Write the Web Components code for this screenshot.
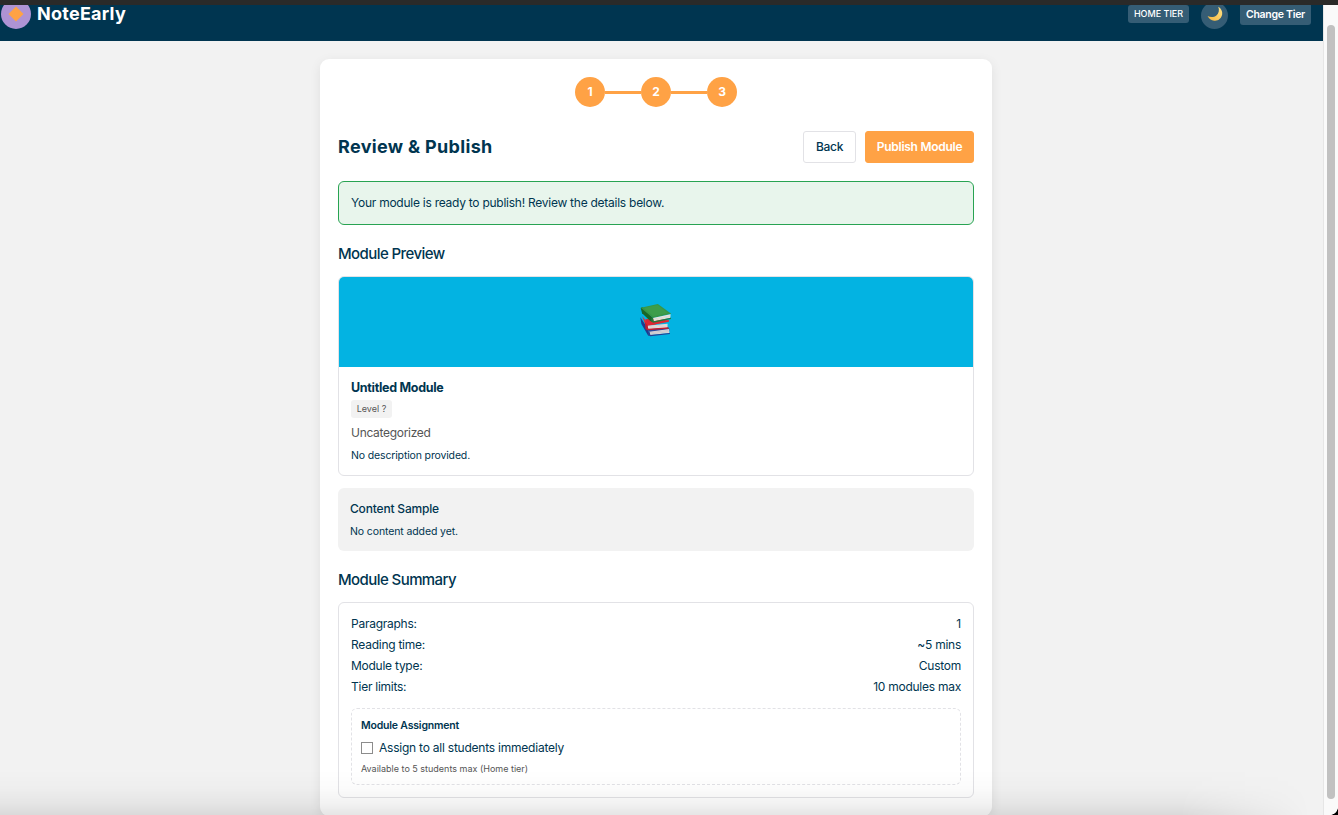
<!DOCTYPE html>
<html lang="en">
<head>
<meta charset="utf-8">
<title>NoteEarly</title>
<style>
html,body{margin:0;height:100%;overflow:hidden}
body{font-family:Inter,"Liberation Sans",sans-serif;font-size:12px;letter-spacing:-.255px;color:#003550;background:#f2f2f2;
--navy:#003550;--orange:#ffa245;--line:#e2e2e6}
</style>
</head>
<body>
<script>
const define=(name,html)=>customElements.define(name,class extends HTMLElement{
  constructor(){super();this.attachShadow({mode:'open'}).innerHTML=html;}
});

define('ne-shell',`<style>
:host{display:grid;grid-template:5px 1fr/1fr 15px;height:100vh;overflow:hidden;position:relative}
.chrome{grid-column:1/3;background:#2a2a29;z-index:2}
.view{min-height:0}
.track{box-sizing:border-box;border-left:1px solid #e6e6e6;background:#fafafa;padding:20px 3px 16px 3px;display:flex}
.thumb{width:8px;border-radius:4px;background:#c1c1c1}
.fade{position:absolute;left:0;right:15px;bottom:0;height:45px;pointer-events:none;background:linear-gradient(to bottom,rgba(0,0,0,0),rgba(0,0,0,.015) 40%,rgba(0,0,0,.05) 75%,rgba(0,0,0,.1));
-webkit-mask-image:linear-gradient(to right,#000 1180px,transparent 1310px)}
.corner{position:absolute;right:0;bottom:0;width:8px;height:8px;background:radial-gradient(circle at 0 0,transparent 7.6px,#000 8.2px)}
</style>
<div class="chrome"></div><div class="view"><slot></slot></div>
<div class="track"><div class="thumb"></div></div><div class="fade"></div><div class="corner"></div>`);

define('ne-header',`<style>
:host{display:flow-root;height:36px;background:var(--navy);color:#fff}
.row{display:flex;align-items:center;height:30px;margin-top:-6px;padding:0 12px 0 1px}
.logo{width:30px;height:30px}
.name{font-size:18px;font-weight:700;letter-spacing:.245px;margin-left:6px;flex:1;padding-bottom:2px}
.btn{box-sizing:border-box;background:#355d75;border-radius:3px;display:flex;align-items:center;justify-content:center}
.tier{width:61px;height:18px;font-size:9px;font-weight:500;letter-spacing:0;padding-bottom:1px}
.moon{width:27px;height:27px;border-radius:50%;margin:3px 12px 0;padding-bottom:4px}
.change{width:71px;height:22px;font-size:10.5px;font-weight:600;letter-spacing:-.28px}
</style>
<div class="row">
<svg class="logo" viewBox="0 0 30 30"><circle cx="15" cy="15" r="15" fill="#ae93d4"/><path d="M15 7.4 22.5 15 15 22.6 7.5 15z" fill="#ffa245"/></svg>
<div class="name">NoteEarly</div>
<div class="btn tier">HOME TIER</div>
<div class="btn moon"><svg width="16" height="16" viewBox="0 0 16 16"><defs><linearGradient id="m" x1="0" y1="1" x2="1" y2="0"><stop offset="0" stop-color="#f4b43c"/><stop offset="1" stop-color="#ffe58a"/></linearGradient></defs><path d="M11.2.7C14 2.200 15.600 5 15.200 8.300c-.6 4-4 6.800-7.900 6.400C4.200 14.400 1.700 12.500.6 9.900c2.800 1.700 6.300 1.500 8.800-.5 2.500-2.100 3.200-5.600 1.800-8.700z" fill="url(#m)"/></svg></div>
<div class="btn change">Change Tier</div>
</div>`);

define('ne-card',`<style>
:host{box-sizing:border-box;display:flex;flex-direction:column;width:672px;height:757px;margin:18px 0 0 320px;padding:18px;background:#fff;border-radius:9px;box-shadow:0 3px 12px rgba(0,0,0,.08)}
::slotted(*){flex:none}
</style><slot></slot>`);

define('ne-steps',`<style>
:host{display:flex;justify-content:center;align-items:center;height:30px}
b{width:30px;height:30px;border-radius:50%;background:var(--orange);color:#fff;text-align:center;line-height:30px;font-size:12px;font-weight:700}
i{width:36px;height:3px;background:var(--orange)}
</style><b>1</b><i></i><b>2</b><i></i><b>3</b>`);

define('ne-titlebar',`<style>
:host{display:flex;align-items:center;height:32px;margin-top:24px}
h1{flex:1;margin:0;padding-bottom:2px;font-size:18px;font-weight:700;letter-spacing:.33px}
</style><h1><slot></slot></h1><slot name="actions"></slot>`);

define('ne-button',`<style>
:host{box-sizing:border-box;display:flex;align-items:center;justify-content:center;width:53px;height:32px;padding-bottom:2px;border:1px solid var(--line);border-radius:3px;font-weight:500;background:#fff;letter-spacing:-.3px}
:host([primary]){width:109px;margin-left:9px;background:var(--orange);border-color:var(--orange);color:#fff;font-weight:600;letter-spacing:-.27px}
</style><slot></slot>`);

define('ne-notice',`<style>
:host{box-sizing:border-box;display:flex;align-items:center;height:44px;margin-top:18px;padding:0 12px 1px;border:1px solid #28a352;border-radius:6px;background:#e8f5ec}
</style><slot></slot>`);

define('ne-heading',`<style>
:host{display:block;font-size:15px;font-weight:500;line-height:20px;letter-spacing:-.58px;margin:19px 0 12px}
</style><slot></slot>`);

define('ne-preview',`<style>
:host{box-sizing:border-box;display:block;height:200px;border:1px solid var(--line);border-radius:6px;overflow:hidden}
.cover{height:90px;background:#03b3e2;display:flex;align-items:center;justify-content:center}
svg{display:block;margin-top:-4px}
.body{display:flex;flex-direction:column;align-items:flex-start;padding:12px}
.title{font-size:12.5px;font-weight:700;line-height:18px;letter-spacing:-.3px}
.level{box-sizing:border-box;height:18px;line-height:18px;width:41px;text-align:center;border-radius:3px;background:#f2f2f2;color:#555;font-size:9px;letter-spacing:0;margin-top:3px}
.cat{color:#555;line-height:18px;margin-top:6px;letter-spacing:-.3px}
.desc{font-size:10.5px;line-height:16px;letter-spacing:-.145px;margin-top:6px}
</style>
<div class="cover"><svg width="33" height="34" viewBox="60 39 96 102" preserveAspectRatio="none">
<path d="M61 82 84 118 84 132 88 138 83 136 64 102z" fill="#203b8e"/>
<path d="M80 116 130 104 147 118 146 122 88 127z" fill="#28479d"/>
<path d="M87 125 145 117 145 129 90 135z" fill="#ddd9db"/>
<path d="M88 128 143 121M89 132 144 125" stroke="#a3a6b2" stroke-width="1"/>
<path d="M83 123 88 127 90 135 147 129 147 132 90 139 84 136z" fill="#263f93"/>
<path d="M66 78 82 98 144 90 144 95 82 108 75 103z" fill="#e42c35"/>
<path d="M76 88 108 84 144 93 80 109z" fill="#dc2632"/>
<path d="M82 107 140 101 140 113 84 118z" fill="#eee5e3"/>
<path d="M84 110 139 104M84 114 140 108" stroke="#b9a5a5" stroke-width="1"/>
<path d="M74 95 82 106 84 116 143 112 143 116 82 121 76 117z" fill="#c21e2d"/>
<path d="M62 54 67 52 98 84 98 97 90 93 66 70z" fill="#196628"/>
<path d="M62 53 112 42 151 71 98 84z" fill="#379647"/>
<path d="M71 54 111 45 141 69 98 79z" fill="#3d9d4b"/>
<path d="M98 84 149 73 148 83 100 94z" fill="#eeeae2"/>
<path d="M101 87 148 77M101 91 148 80" stroke="#b9b7ae" stroke-width="1"/>
<path d="M94 82 98 85 100 94 150 83 150 87 99 98 92 94z" fill="#23783a"/>
</svg></div>
<div class="body"><div class="title">Untitled Module</div><div class="level">Level ?</div><div class="cat">Uncategorized</div><div class="desc">No description provided.</div></div>`);

define('ne-sample',`<style>
:host{box-sizing:border-box;display:block;height:63px;margin-top:12px;padding:12px;border-radius:6px;background:#f2f2f2}
.t{font-weight:500;line-height:18px;letter-spacing:-.18px}
.d{font-size:10.5px;line-height:16px;letter-spacing:-.11px;margin-top:6px}
</style><div class="t">Content Sample</div><div class="d">No content added yet.</div>`);

define('ne-summary',`<style>
:host{box-sizing:border-box;display:block;height:196px;padding:10px 12px 12px;border:1px solid var(--line);border-radius:6px}
</style><slot></slot>`);

define('ne-row',`<style>
:host{display:flex;justify-content:space-between;line-height:21px}
</style><slot name="label"></slot><slot></slot>`);

define('ne-assign',`<style>
:host{box-sizing:border-box;display:block;height:77px;margin-top:11px;padding:9px 9px 8px;border:1px dashed var(--line);border-radius:6px}
.t{font-size:10.5px;font-weight:600;line-height:16px;letter-spacing:-.19px}
.c{display:flex;align-items:center;line-height:18px;margin-top:5px;letter-spacing:-.227px}
.c i{box-sizing:border-box;width:12px;height:12px;border:1px solid #8c8c8c;background:#fff;margin-right:6px}
.n{font-size:9px;line-height:14px;letter-spacing:0;color:#555;margin-top:5px}
</style><div class="t">Module Assignment</div><div class="c"><i></i>Assign to all students immediately</div><div class="n">Available to 5 students max (Home tier)</div>`);
</script>
<ne-shell>
  <ne-header></ne-header>
  <ne-card>
    <ne-steps></ne-steps>
    <ne-titlebar>Review &amp; Publish<ne-button slot="actions">Back</ne-button><ne-button slot="actions" primary>Publish Module</ne-button></ne-titlebar>
    <ne-notice>Your module is ready to publish! Review the details below.</ne-notice>
    <ne-heading>Module Preview</ne-heading>
    <ne-preview></ne-preview>
    <ne-sample></ne-sample>
    <ne-heading>Module Summary</ne-heading>
    <ne-summary>
      <ne-row><span slot="label">Paragraphs:</span><span>1</span></ne-row>
      <ne-row><span slot="label">Reading time:</span><span>~5 mins</span></ne-row>
      <ne-row><span slot="label">Module type:</span><span>Custom</span></ne-row>
      <ne-row><span slot="label">Tier limits:</span><span>10 modules max</span></ne-row>
      <ne-assign></ne-assign>
    </ne-summary>
  </ne-card>
</ne-shell>
</body>
</html>
